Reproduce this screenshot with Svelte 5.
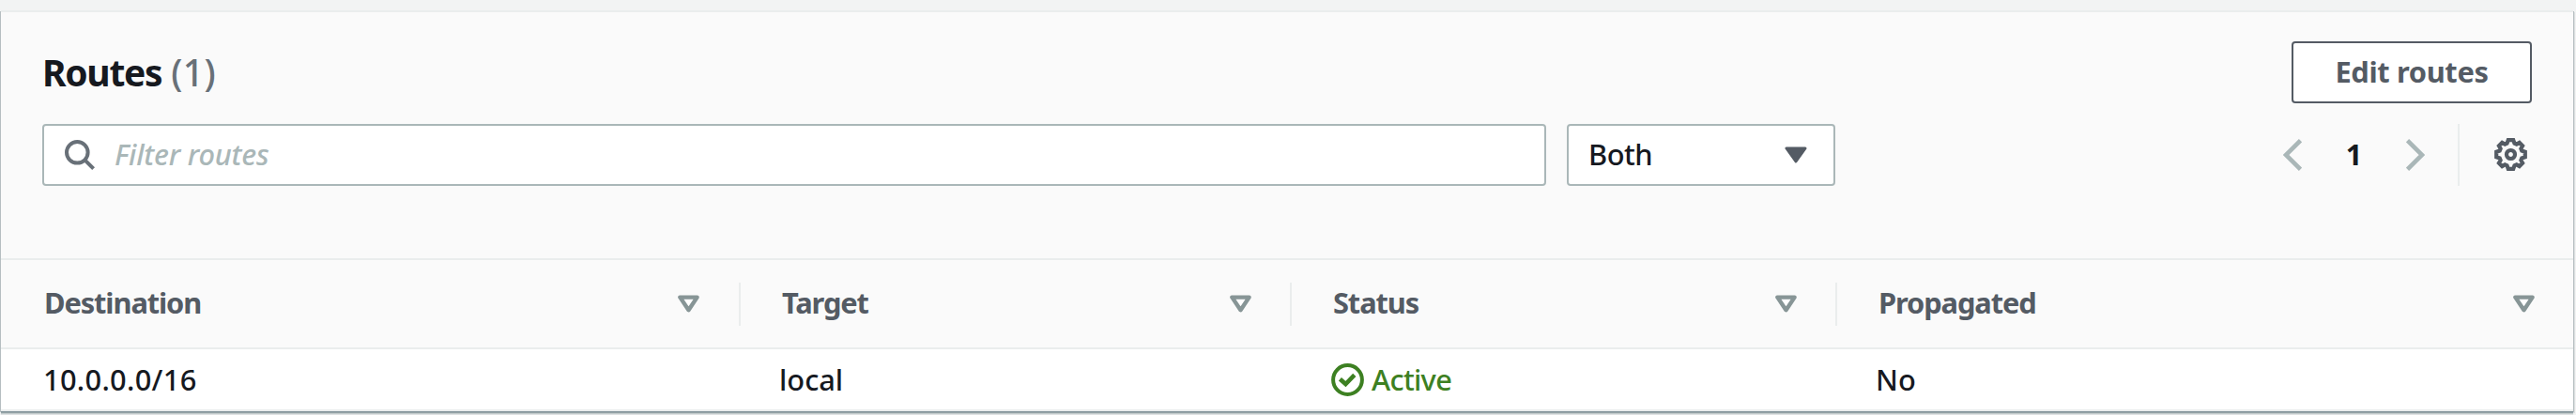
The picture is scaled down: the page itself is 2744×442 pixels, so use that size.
<script>
  const columns = ['Destination', 'Target', 'Status', 'Propagated'];
  const routes = [
    { destination: '10.0.0.0/16', target: 'local', status: 'Active', propagated: 'No' }
  ];
</script>

<main>
<section class="panel">
  <header class="top">
    <div class="title-row">
      <h2>Routes <span class="count">(1)</span></h2>
      <button class="edit">Edit routes</button>
    </div>
    <div class="tools">
      <label class="search">
        <svg width="32" height="32" viewBox="0 0 32 32" fill="none" stroke="#687078" stroke-width="4">
          <circle cx="13.3" cy="13.3" r="11.3" />
          <path d="M20.8 20.8 30.6 30.6" />
        </svg>
        <span>Filter routes</span>
      </label>
      <div class="select">
        <span>Both</span>
        <svg width="24" height="18" viewBox="0 0 24 18">
          <path d="M2 2H22L12 16Z" fill="#545b64" stroke="#545b64" stroke-width="3" stroke-linejoin="round" />
        </svg>
      </div>
      <nav class="pager">
        <svg width="20" height="34" viewBox="0 0 20 34" fill="none" stroke="#aab7b8" stroke-width="4.6">
          <path d="M18.5 1.7 3 17 18.5 32.3" />
        </svg>
        <b>1</b>
        <svg width="20" height="34" viewBox="0 0 20 34" fill="none" stroke="#aab7b8" stroke-width="4.6">
          <path d="M1.5 1.7 17 17 1.5 32.3" />
        </svg>
      </nav>
      <div class="settings">
        <svg width="35" height="35" viewBox="-17.5 -17.5 35 35" fill="none" stroke="#545b64">
          <circle r="4.5" stroke-width="4.2" />
          <path
            stroke-width="4.2"
            d="M-2.7 -15.3H2.7L4 -11.8 6.2 -10.9 9.2 -12.6 12.6 -9.2 10.9 -6.2 11.8 -4 15.3 -2.7V2.7L11.8 4 10.9 6.2 12.6 9.2 9.2 12.6 6.2 10.9 4 11.8 2.7 15.3H-2.7L-4 11.8 -6.2 10.9 -9.2 12.6 -12.6 9.2 -10.9 6.2 -11.8 4 -15.3 2.7V-2.7L-11.8 -4 -10.9 -6.2 -12.6 -9.2 -9.2 -12.6 -6.2 -10.9 -4 -11.8Z"
          />
        </svg>
      </div>
    </div>
  </header>

  <div class="row head">
    {#each columns as name}
      <div class="cell">
        <span>{name}</span>
        <svg width="23" height="19" viewBox="0 0 23 19">
          <path d="M2.4 2.6H20.6L11.5 16.2Z" fill="#fff" stroke="#879596" stroke-width="4.4" stroke-linejoin="round" />
        </svg>
      </div>
    {/each}
  </div>

  {#each routes as route}
    <div class="row body">
      <div class="cell wide">{route.destination}</div>
      <div class="cell">{route.target}</div>
      <div class="cell status">
        <svg width="35" height="35" viewBox="0 0 35 35" fill="none" stroke="#3d8022" stroke-width="4">
          <circle cx="17.5" cy="17.5" r="15.4" />
          <path d="M9.4 16.8 15.4 22 24.8 12.4" stroke-width="4.6" />
        </svg>
        <span>{route.status}</span>
      </div>
      <div class="cell">{route.propagated}</div>
    </div>
  {/each}
</section>
</main>

<style>
  :global(body) {
    margin: 0;
    background: #f2f3f3;
  }
  main {
    box-sizing: border-box;
    height: 442px;
    padding: 11px 0 0 1px;
    background: #f2f3f3;
  }
  .panel {
    box-sizing: border-box;
    width: 2740px;
    height: 427px;
    border-top: 2px solid #eaeded;
    background: #fff;
    box-shadow:
      0 1px 0 #82939a,
      0 2px 0 #95a3a7,
      0 3px 0 #c4cccd,
      -1px 1px 0 #b6bec1,
      1px 1px 0 #b6bec1,
      2px 2px 0 #dde0e1,
      0 4px 0 #dfe2e3;
    font: 500 30.8px/42px 'Noto Sans', sans-serif;
    color: #16191f;
  }
  svg {
    display: block;
    flex: none;
  }
  .top {
    box-sizing: border-box;
    height: 264px;
    padding: 31px 44px 0;
    border-bottom: 2px solid #eaeded;
    background: #fafafa;
  }
  .title-row {
    display: flex;
    justify-content: space-between;
    height: 66px;
  }
  h2 {
    margin: 0;
    font-size: 39px;
    line-height: 66px;
    letter-spacing: -1.3px;
  }
  .count {
    margin-left: 1px;
    font-weight: 500;
    color: #687078;
    letter-spacing: 0.4px;
  }
  .edit {
    box-sizing: border-box;
    width: 256px;
    height: 66px;
    padding: 0 0 2px;
    border: 2px solid #545b64;
    border-radius: 4px;
    background: #fff;
    color: #545b64;
    font: 700 30.8px 'Noto Sans', sans-serif;
    letter-spacing: -0.35px;
  }
  .tools {
    display: flex;
    align-items: center;
    height: 66px;
    margin-top: 22px;
  }
  .search,
  .select {
    box-sizing: border-box;
    display: flex;
    align-items: center;
    height: 66px;
    border: 2px solid #aab7b8;
    border-radius: 4px;
    background: #fff;
  }
  .search {
    width: 1602px;
    gap: 21px;
    padding-left: 22px;
    color: #aab7b8;
    font-style: italic;
    letter-spacing: -0.2px;
  }
  .search span,
  .select span,
  .pager b {
    margin-top: -2px;
  }
  .select {
    justify-content: space-between;
    width: 286px;
    margin-left: 22px;
    padding: 0 28px 0 21px;
    letter-spacing: -0.5px;
  }
  .pager {
    display: flex;
    align-items: center;
    justify-content: space-between;
    width: 151px;
    margin-left: auto;
    margin-right: 35px;
  }
  .settings {
    box-sizing: border-box;
    display: flex;
    align-items: center;
    width: 79px;
    height: 66px;
    padding: 0 0 1px 37px;
    border-left: 2px solid #eaeded;
  }
  .row {
    box-sizing: border-box;
    display: grid;
    grid-template-columns: 788px 587px 581px 784px;
    border-bottom: 2px solid #eaeded;
  }
  .head {
    height: 95px;
    align-items: center;
    background: #fafafa;
    color: #545b64;
    font-weight: 700;
    letter-spacing: -1.1px;
  }
  .cell {
    box-sizing: border-box;
    display: flex;
    align-items: center;
    padding-left: 41px;
  }
  .cell:first-child {
    padding-left: 45px;
  }
  .head .cell {
    justify-content: space-between;
    height: 46px;
    padding-left: 44px;
    padding-right: 41px;
    border-right: 2px solid #eaeded;
  }
  .head .cell:first-child {
    padding-left: 46px;
    padding-right: 42px;
  }
  .head .cell:last-child {
    border-right-color: transparent;
    padding-right: 39px;
  }
  .head span {
    margin-top: -3px;
  }
  .body {
    height: 66px;
  }
  .wide {
    letter-spacing: 0.3px;
  }
  .body .status {
    gap: 8px;
    padding-left: 42px;
    color: #3d8022;
    letter-spacing: -0.7px;
  }
</style>
